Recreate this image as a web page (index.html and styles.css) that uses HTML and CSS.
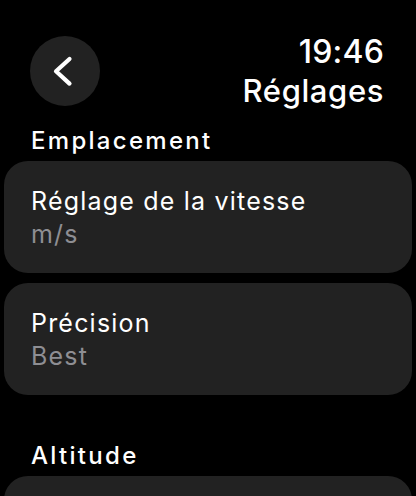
FILE: index.html
```html
<!DOCTYPE html>
<html lang="fr">
<head>
<meta charset="utf-8">
<link rel="stylesheet" href="styles.css">
</head>
<body>
<div class="screen">
  <header class="header">
    <button class="back" aria-label="Retour">
      <svg width="70" height="70" viewBox="0 0 70 70"><path d="M39.5 23 L26 35.3 L39.5 47.6" fill="none" stroke="#fff" stroke-width="4.2" stroke-linecap="round" stroke-linejoin="round"/></svg>
    </button>
    <div class="titles">
      <div class="time">19:46</div>
      <div class="title">Réglages</div>
    </div>
  </header>
  <div class="section-label first">Emplacement</div>
  <div class="card">
    <div class="card-title">Réglage de la vitesse</div>
    <div class="card-value">m/s</div>
  </div>
  <div class="card">
    <div class="card-title">Précision</div>
    <div class="card-value">Best</div>
  </div>
  <div class="section-label">Altitude</div>
  <div class="card card-empty"></div>
</div>
</body>
</html>
```
FILE: styles.css
```css
html, body {
  margin: 0;
  padding: 0;
  background: #000;
}
body {
  font-family: Inter, "Noto Sans", sans-serif;
  color: #fff;
  width: 416px;
  height: 496px;
  overflow: hidden;
}
.screen {
  padding: 0 4px;
}
.header {
  display: flex;
  justify-content: space-between;
  align-items: flex-start;
  padding: 32px 28px 0 26px;
}
.back {
  width: 70px;
  height: 70px;
  margin-top: 4px;
  border: none;
  border-radius: 50%;
  background: #222222;
  padding: 0;
  display: block;
}
.back svg { display: block; }
.titles {
  text-align: right;
  font-weight: 500;
}
.time {
  font-size: 32px;
  line-height: 39px;
  letter-spacing: 0.2px;
}
.title {
  font-size: 31px;
  line-height: 39px;
  letter-spacing: 0.6px;
}
.section-label {
  font-size: 24px;
  line-height: 30px;
  font-weight: 500;
  letter-spacing: 2.3px;
  padding-left: 27px;
  margin: 46px 0 5px;
}
.section-label.first {
  margin-top: 16px;
}
.card {
  background: #222222;
  border-radius: 24px;
  padding: 24px 27px 22px;
  margin-bottom: 10px;
}
.card-empty {
  height: 66px;
}
.card-title {
  font-size: 25px;
  line-height: 32px;
  letter-spacing: 1.2px;
}
.card-value {
  font-size: 25px;
  line-height: 34px;
  color: #8e8e93;
  letter-spacing: 1.2px;
}
```
